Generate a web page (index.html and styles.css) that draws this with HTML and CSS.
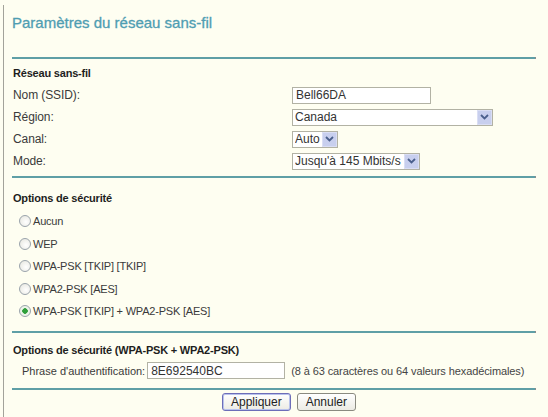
FILE: index.html
```
<!DOCTYPE html>
<html>
<head>
    <title>Paramètres du réseau sans-fil</title>
    <link rel="stylesheet" href="styles.css">
</head>
<body>
    <div class="page">
        <h1 class="title">Paramètres du réseau sans-fil</h1>
        <div class="rule"></div>

        <div class="section">
            <h2>Réseau sans-fil</h2>
            <div class="row">
                <label for="ssid">Nom (SSID):</label>
                <input type="text" id="ssid" class="ssid" value="Bell66DA">
            </div>
            <div class="row">
                <label for="region">Région:</label>
                <span class="select region">
                    <select id="region"><option>Canada</option></select>
                    <span class="arrow"><svg width="9" height="6" viewBox="0 0 9 6"><path d="M1 1 L4.5 4.5 L8 1" fill="none" stroke="#4a5f8c" stroke-width="1.8"/></svg></span>
                </span>
            </div>
            <div class="row">
                <label for="canal">Canal:</label>
                <span class="select canal">
                    <select id="canal"><option>Auto</option></select>
                    <span class="arrow"><svg width="9" height="6" viewBox="0 0 9 6"><path d="M1 1 L4.5 4.5 L8 1" fill="none" stroke="#4a5f8c" stroke-width="1.8"/></svg></span>
                </span>
            </div>
            <div class="row">
                <label for="mode">Mode:</label>
                <span class="select mode">
                    <select id="mode"><option>Jusqu'à 145 Mbits/s</option></select>
                    <span class="arrow"><svg width="9" height="6" viewBox="0 0 9 6"><path d="M1 1 L4.5 4.5 L8 1" fill="none" stroke="#4a5f8c" stroke-width="1.8"/></svg></span>
                </span>
            </div>
        </div>
        <div class="rule"></div>

        <div class="section options">
            <h2>Options de sécurité</h2>
            <label class="radio"><input type="radio" name="sec"> Aucun</label>
            <label class="radio"><input type="radio" name="sec"> WEP</label>
            <label class="radio"><input type="radio" name="sec"> WPA-PSK [TKIP] [TKIP]</label>
            <label class="radio"><input type="radio" name="sec"> WPA2-PSK [AES]</label>
            <label class="radio"><input type="radio" name="sec" checked> WPA-PSK [TKIP] + WPA2-PSK [AES]</label>
        </div>
        <div class="rule"></div>

        <div class="section wpa">
            <h2>Options de sécurité (WPA-PSK + WPA2-PSK)</h2>
            <div class="pass-row">
                <label for="pass">Phrase d'authentification:</label>
                <input type="text" id="pass" class="pass" value="8E692540BC">
                <span class="hint">(8 à 63 caractères ou 64 valeurs hexadécimales)</span>
            </div>
        </div>
        <div class="rule"></div>

        <div class="buttons">
            <button class="default">Appliquer</button>
            <button>Annuler</button>
        </div>
    </div>
</body>
</html>
```

FILE: styles.css
```
body {
    margin: 0;
    background: #fefef1;
    font-family: 'Liberation Sans', Arial, sans-serif;
    font-size: 12px;
    color: #3a3a3a;
}
.page {
    margin: 5px 0 0 3px;
    padding-left: 8px;
    border-left: 1px solid #a3a39a;
    width: 533px;
    min-height: 412px;
    box-sizing: border-box;
}
.title {
    margin: 0;
    padding-top: 9px;
    height: 43px;
    font-size: 15px;
    font-weight: normal;
    color: #4f9db2;
    -webkit-text-stroke: 0.3px #4f9db2;
}
.rule {
    height: 2px;
    background: #5f9fa6;
    border-right: 1px solid #8d8d8d;
}
.section {
    padding: 8px 0 4px 1px;
}
h2 {
    margin: 0 0 5px;
    font-size: 11px;
    font-weight: bold;
    color: #1e1e1e;
    letter-spacing: -0.2px;
}
.row {
    display: grid;
    grid-template-columns: 279px auto;
    align-items: center;
    height: 22px;
    letter-spacing: -0.1px;
}
input[type="text"], select {
    font-family: 'Liberation Sans', Arial, sans-serif;
    font-size: 12px;
    color: #333;
    height: 17px;
    box-sizing: border-box;
    border: 1px solid #b2b2a4;
    background: #fff;
    padding: 0 3px;
    margin: 0;
}
.ssid { width: 139px; }
.select {
    position: relative;
    display: inline-block;
    height: 17px;
}
.select select {
    appearance: none;
    -webkit-appearance: none;
    width: 100%;
    padding: 0 16px 0 2px;
    border-radius: 0;
}
.region { width: 201px; }
.canal { width: 46px; }
.mode { width: 128px; }
.arrow {
    position: absolute;
    right: 1px;
    top: 1px;
    width: 15px;
    height: 15px;
    background: #c8cfee;
    border: 1px solid #dadef4;
    box-sizing: border-box;
    display: flex;
    align-items: center;
    justify-content: center;
}
.options {
    padding-top: 14px;
    padding-bottom: 8px;
}
.options h2 {
    margin-bottom: 6px;
}
.radio {
    display: flex;
    align-items: center;
    height: 22.5px;
    padding-left: 6px;
    font-size: 11px;
    letter-spacing: -0.2px;
}
.radio input {
    appearance: none;
    -webkit-appearance: none;
    width: 12px;
    height: 12px;
    margin: 0 2px 0 0;
    border: 1px solid #9aa3ab;
    border-radius: 50%;
    background: radial-gradient(circle at 60% 60%, #ffffff, #e4e4dc);
}
.radio input:checked {
    background: radial-gradient(circle, #2f9f3a 0 2.5px, #e9f4e6 3px, #f6f6f0);
}
.wpa {
    padding-top: 11px;
    padding-bottom: 7px;
}
.wpa h2 {
    margin-bottom: 5px;
}
.pass-row {
    display: flex;
    align-items: center;
    height: 20px;
    padding-left: 9px;
    font-size: 11px;
}
.pass {
    width: 138px;
    margin-left: 2px !important;
}
.hint {
    margin-left: 6px;
    color: #444;
    letter-spacing: -0.1px;
}
.buttons {
    display: flex;
    justify-content: center;
    gap: 6px;
    padding: 3px 0 0 30px;
}
button {
    font-family: 'Liberation Sans', Arial, sans-serif;
    font-size: 12px;
    color: #222;
    height: 18px;
    padding: 0 8px;
    border: 1px solid #8a8a80;
    border-radius: 3px;
    background: linear-gradient(to bottom, #ffffff, #ecebe4);
}
button.default {
    border-color: #6d6db8;
    box-shadow: inset 0 0 0 1px #b8c2ec;
}
```
